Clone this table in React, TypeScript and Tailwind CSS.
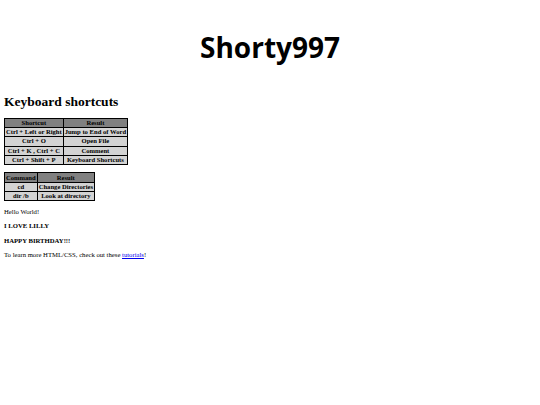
import React from "react";

const shortcuts = [
  ["Ctrl + Left or Right", "Jump to End of Word"],
  ["Ctrl + O", "Open File"],
  ["Ctrl + K , Ctrl + C", "Comment"],
  ["Ctrl + Shift + P", "Keyboard Shortcuts"],
];

const commands = [
  ["cd", "Change Directories"],
  ["dir /b", "Look at directory"],
];

const KeyTable = ({ head, rows }: { head: string[]; rows: string[][] }) => (
  <table className="border-collapse border border-black text-[6.6px] font-bold leading-[8px]">
    <thead>
      <tr className="bg-[#808080] h-[9.2px]">
        {head.map((h) => (
          <th key={h} className="border border-black px-[1px] py-0">
            {h}
          </th>
        ))}
      </tr>
    </thead>
    <tbody>
      {rows.map((r, i) => (
        <tr key={i} className="bg-[#d3d3d3] h-[9.2px]">
          {r.map((c, j) => (
            <td key={j} className="border border-black px-[1px] py-0 text-center whitespace-nowrap">
              {c}
            </td>
          ))}
        </tr>
      ))}
    </tbody>
  </table>
);

export default function App() {
  return (
    <div className="w-[540px] h-[405px] bg-white text-black font-['Liberation_Serif',serif]">
      <h1 className="pt-[29px] text-center font-['Open_Sans',sans-serif] font-bold text-[28px] leading-[36px]">
        Shorty997
      </h1>
      <div className="px-[4px]">
        <h2 className="mt-[29px] text-[13.5px] font-bold leading-[16px]">Keyboard shortcuts</h2>
        <div className="mt-[8px]">
          <KeyTable head={["Shortcut", "Result"]} rows={shortcuts} />
        </div>
        <div className="mt-[7.5px]">
          <KeyTable head={["Command", "Result"]} rows={commands} />
        </div>
        <p className="mt-[6.5px] text-[6.7px] leading-[8px]">Hello World!</p>
        <p className="mt-[6.5px] text-[6.7px] leading-[8px] font-bold">I LOVE LILLY</p>
        <p className="mt-[6.5px] text-[6.7px] leading-[8px] font-bold">HAPPY BIRTHDAY!!!</p>
        <p className="mt-[6.5px] text-[6.7px] leading-[8px]">
          To learn more HTML/CSS, check out these{" "}
          <a href="#" className="text-[#0000ee] underline">
            tutorials
          </a>
          !
        </p>
      </div>
    </div>
  );
}
